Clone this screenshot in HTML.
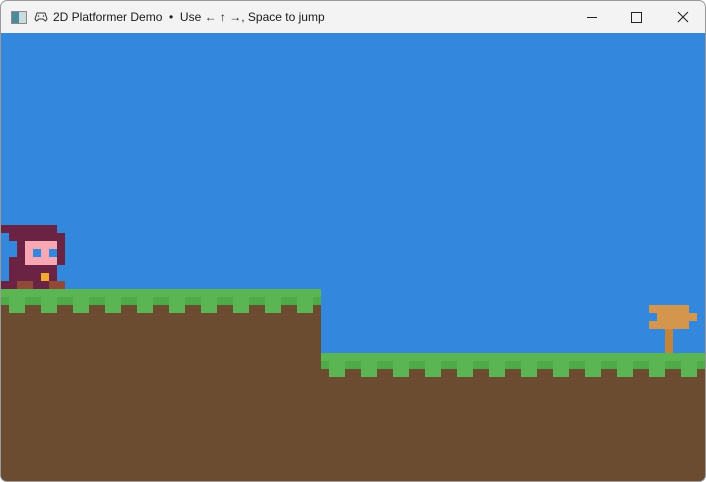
<!DOCTYPE html><html><head><style>
body{margin:0;width:706px;height:482px;overflow:hidden;background:#fff;font-family:"Liberation Sans",sans-serif}
#win{position:absolute;left:0;top:0;width:704px;height:480px;border:1px solid #9a9a9a;border-radius:7px;overflow:hidden;background:#3388dd}
#tb{position:absolute;left:0;top:0;width:704px;height:32px;background:#f3f3f3;font-size:12px;color:#1a1a1a}
.r{position:absolute}
</style></head><body><div id="win">
<div id="tb">
<div class="r" style="left:10px;top:10px;width:14px;height:11px;border:1px solid #8a8a8a;background:linear-gradient(90deg,#4a8a9a 50%,#c8dce0 50%)"></div>
<svg class="r" style="left:33px;top:10px" width="14" height="12" viewBox="0 0 14 12"><path d="M3 2h8l2 6-1.5 2-2.5-2H5l-2.5 2L1 8z" fill="none" stroke="#333" stroke-width="1"/><circle cx="4.5" cy="5" r=".8" fill="#333"/><circle cx="9.5" cy="5" r=".8" fill="#333"/></svg>
<div class="r" style="left:52px;top:9px;white-space:nowrap">2D Platformer Demo &nbsp;•&nbsp; Use ← ↑ →, Space to jump</div>
<div class="r" style="left:586px;top:16px;width:10px;height:1px;background:#222"></div>
<div class="r" style="left:630px;top:11px;width:9px;height:9px;border:1px solid #222"></div>
<svg class="r" style="left:676px;top:10px" width="12" height="12"><path d="M1 1L11 11M11 1L1 11" stroke="#222" stroke-width="1.1"/></svg>
</div>
<svg class="r" style="left:-1px;top:-1px" width="706" height="482" shape-rendering="crispEdges">
<rect x="0" y="33" width="706" height="449" fill="#3388dd"/>
<!-- left platform -->
<rect x="0" y="289" width="321" height="200" fill="#6b4c30"/>
<rect x="0" y="289" width="321" height="8" fill="#5ab552"/>
<rect x="0" y="297" width="321" height="8" fill="#4faa48"/>
<g fill="#5ab552"><rect x="9" y="297" width="16" height="16"/><rect x="41" y="297" width="16" height="16"/><rect x="73" y="297" width="16" height="16"/><rect x="105" y="297" width="16" height="16"/><rect x="137" y="297" width="16" height="16"/><rect x="169" y="297" width="16" height="16"/><rect x="201" y="297" width="16" height="16"/><rect x="233" y="297" width="16" height="16"/><rect x="265" y="297" width="16" height="16"/><rect x="297" y="297" width="16" height="16"/></g>
<!-- right platform -->
<rect x="321" y="353" width="390" height="140" fill="#6b4c30"/>
<rect x="321" y="353" width="390" height="8" fill="#5ab552"/>
<rect x="321" y="361" width="390" height="8" fill="#4faa48"/>
<g fill="#5ab552"><rect x="329" y="361" width="16" height="16"/><rect x="361" y="361" width="16" height="16"/><rect x="393" y="361" width="16" height="16"/><rect x="425" y="361" width="16" height="16"/><rect x="457" y="361" width="16" height="16"/><rect x="489" y="361" width="16" height="16"/><rect x="521" y="361" width="16" height="16"/><rect x="553" y="361" width="16" height="16"/><rect x="585" y="361" width="16" height="16"/><rect x="617" y="361" width="16" height="16"/><rect x="649" y="361" width="16" height="16"/><rect x="681" y="361" width="16" height="16"/></g>
<!-- sign -->
<rect x="665" y="329" width="8" height="24" fill="#c4843a"/>
<g fill="#d3964c"><rect x="649" y="305" width="40" height="8"/><rect x="657" y="313" width="40" height="8"/><rect x="649" y="321" width="40" height="8"/></g>
<!-- character -->
<g fill="#6b2344"><rect x="1" y="225" width="56" height="8"/><rect x="9" y="233" width="56" height="8"/><rect x="17" y="241" width="48" height="16"/><rect x="9" y="257" width="56" height="8"/><rect x="9" y="265" width="48" height="16"/><rect x="1" y="281" width="64" height="8"/></g>
<rect x="25" y="241" width="32" height="24" fill="#f7a8b4"/>
<rect x="33" y="249" width="8" height="8" fill="#3388dd"/><rect x="49" y="249" width="8" height="8" fill="#3388dd"/>
<rect x="41" y="273" width="8" height="8" fill="#f4a830"/>
<rect x="17" y="281" width="16" height="8" fill="#8f4a3a"/><rect x="49" y="281" width="16" height="8" fill="#8f4a3a"/>
</svg>
</div></body></html>
